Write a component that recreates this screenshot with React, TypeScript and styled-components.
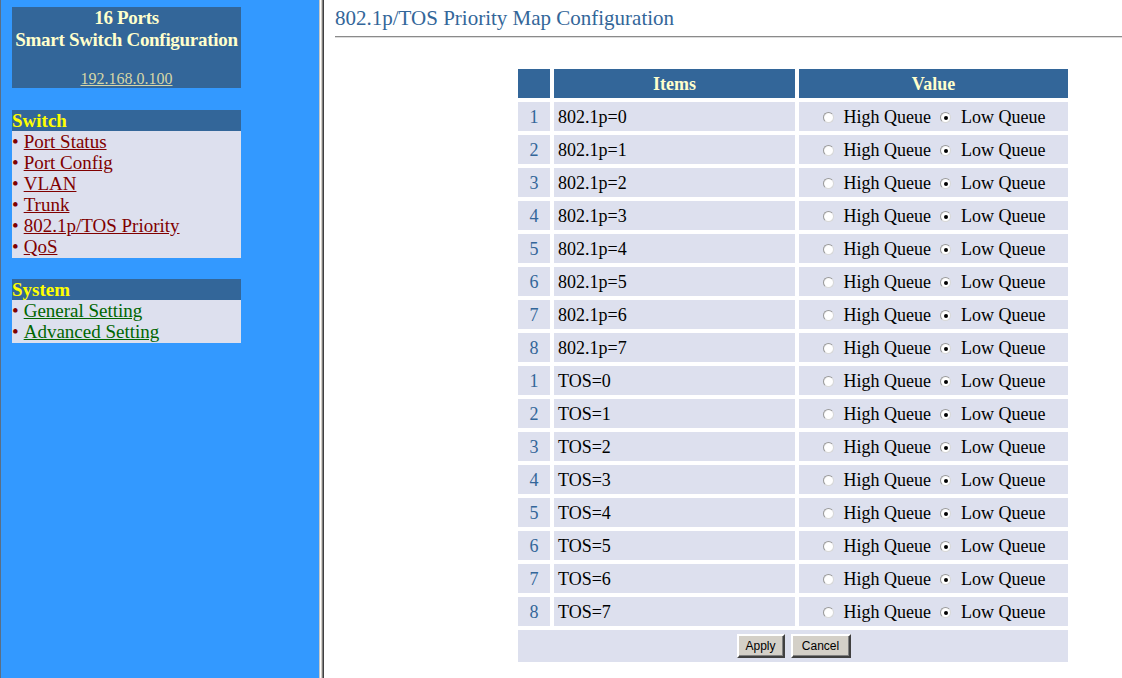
import React from 'react';
import styled, { createGlobalStyle } from 'styled-components';

const GlobalStyle = createGlobalStyle`
  html, body {
    margin: 0;
    padding: 0;
    height: 100%;
    overflow: hidden;
    background: #ffffff;
  }
  #root {
    height: 100%;
  }
`;

const Frameset = styled.div`
  display: grid;
  grid-template-columns: 319px 5px 1fr;
  height: 100vh;
  font-family: "Liberation Serif", "Times New Roman", serif;
`;

const MenuFrame = styled.div`
  background: #3399ff;
  border-left: 1px solid #5a6f86;
  padding: 7px 0 0 11px;
  display: flex;
  flex-direction: column;
`;

const FrameBorder = styled.div`
  background: linear-gradient(
    to right,
    #c8c8c8 0 1px,
    #ffffff 1px 2px,
    #d4d0c8 2px 3px,
    #808080 3px 4px,
    #404040 4px 5px
  );
`;

const TitleBox = styled.div`
  width: 229px;
  height: 81px;
  background: #336699;
  color: #ffffcc;
  text-align: center;
  font-weight: bold;
  font-size: 19px;
  line-height: 22px;
  letter-spacing: -0.3px;
  white-space: nowrap;
  box-sizing: border-box;
`;

const HostLink = styled.a`
  display: block;
  margin-top: 19px;
  font-weight: normal;
  font-size: 16px;
  line-height: 18px;
  letter-spacing: 0;
  color: #d6d6a6;
  text-decoration: underline;
`;

const MenuSection = styled.div<{ $gap: number }>`
  width: 229px;
  margin-top: ${(p) => p.$gap}px;
`;

const MenuHeader = styled.div`
  background: #336699;
  color: #ffff00;
  font-weight: bold;
  font-size: 19px;
  line-height: 21px;
  height: 21px;
`;

const MenuList = styled.div`
  background: #dde0ee;
  padding-bottom: 1px;
`;

const MenuItem = styled.div<{ $color: string }>`
  font-size: 19px;
  line-height: 21px;
  height: 21px;
  color: #800000;
  white-space: nowrap;

  a {
    color: ${(p) => p.$color};
    text-decoration: underline;
  }
`;

const Bullet = styled.span`
  color: #800000;
  margin-right: 5px;
`;

const ContentFrame = styled.div`
  padding: 6px 0 0 11px;
`;

const PageTitle = styled.div`
  color: #336699;
  font-size: 21px;
  line-height: 24px;
  height: 24px;
  white-space: nowrap;
`;

const Rule = styled.div`
  margin-top: 6px;
  border-top: 1px solid #8a8a8a;
  border-bottom: 1px solid #dcdcdc;
`;

const MapTable = styled.table`
  margin: 27px 0 0 179px;
  border-collapse: separate;
  border-spacing: 4px;
  font-size: 18px;
`;

const HeadCell = styled.th<{ $w: number }>`
  width: ${(p) => p.$w}px;
  height: 29px;
  padding: 2px 0 0;
  box-sizing: border-box;
  background: #336699;
  color: #ffffcc;
  font-weight: bold;
  text-align: center;
  vertical-align: middle;
`;

const NumCell = styled.td`
  height: 29px;
  padding: 2px 0 0;
  box-sizing: border-box;
  background: #dde0ee;
  color: #336699;
  text-align: center;
  vertical-align: middle;
`;

const ItemCell = styled.td`
  height: 29px;
  padding: 2px 0 0 4px;
  box-sizing: border-box;
  background: #dde0ee;
  color: #000000;
  text-align: left;
  vertical-align: middle;
  white-space: nowrap;
`;

const ValueCell = styled.td`
  height: 29px;
  padding: 2px 0 0 2px;
  box-sizing: border-box;
  background: #dde0ee;
  color: #000000;
  text-align: center;
  vertical-align: middle;
  white-space: nowrap;
`;

const ButtonCell = styled.td`
  height: 32px;
  padding: 0 0 0 1px;
  background: #dde0ee;
  text-align: center;
  vertical-align: middle;
`;

const Option = styled.label`
  display: inline-flex;
  align-items: center;
  margin-right: 5px;
`;

const Radio = styled.span<{ $checked: boolean }>`
  display: inline-block;
  position: relative;
  width: 9px;
  height: 9px;
  border-radius: 50%;
  border: 1px solid #9a9a9a;
  border-bottom-color: #d8d8d8;
  border-right-color: #d8d8d8;
  background: radial-gradient(circle at 60% 60%, #ffffff 0 55%, #e6e6e6 100%);
  margin: 0 10px 0 4px;

  &::after {
    content: '';
    display: ${(p) => (p.$checked ? 'block' : 'none')};
    position: absolute;
    left: 2.5px;
    top: 2.5px;
    width: 4px;
    height: 4px;
    border-radius: 50%;
    background: #000000;
  }
`;

const Button = styled.button<{ $w: number }>`
  width: ${(p) => p.$w}px;
  height: 24px;
  padding: 0;
  margin: 0 3px;
  vertical-align: middle;
  background: #d4d0c8;
  color: #000000;
  font-family: "Liberation Sans", Arial, sans-serif;
  font-size: 12px;
  border: 2px solid;
  border-color: #ffffff #404040 #404040 #ffffff;
  box-shadow: inset -1px -1px 0 #808080;
  border-radius: 0;
`;

const rows = [
  ...Array.from({ length: 8 }, (_, i) => ({ num: i + 1, label: `802.1p=${i}` })),
  ...Array.from({ length: 8 }, (_, i) => ({ num: i + 1, label: `TOS=${i}` })),
];

const switchLinks = ['Port Status', 'Port Config', 'VLAN', 'Trunk', '802.1p/TOS Priority', 'QoS'];
const systemLinks = ['General Setting', 'Advanced Setting'];

const App: React.FC = () => (
  <>
    <GlobalStyle />
    <Frameset>
      <MenuFrame>
        <TitleBox>
          16 Ports
          <br />
          Smart Switch Configuration
          <HostLink href="#">192.168.0.100</HostLink>
        </TitleBox>
        <MenuSection $gap={22}>
          <MenuHeader>Switch</MenuHeader>
          <MenuList>
            {switchLinks.map((name) => (
              <MenuItem key={name} $color="#800000">
                <Bullet>•</Bullet>
                <a href="#">{name}</a>
              </MenuItem>
            ))}
          </MenuList>
        </MenuSection>
        <MenuSection $gap={21}>
          <MenuHeader>System</MenuHeader>
          <MenuList>
            {systemLinks.map((name) => (
              <MenuItem key={name} $color="#006600">
                <Bullet>•</Bullet>
                <a href="#">{name}</a>
              </MenuItem>
            ))}
          </MenuList>
        </MenuSection>
      </MenuFrame>
      <FrameBorder />
      <ContentFrame>
        <PageTitle>802.1p/TOS Priority Map Configuration</PageTitle>
        <Rule />
        <MapTable>
          <thead>
            <tr>
              <HeadCell $w={32} />
              <HeadCell $w={241}>Items</HeadCell>
              <HeadCell $w={269}>Value</HeadCell>
            </tr>
          </thead>
          <tbody>
            {rows.map((row) => (
              <tr key={row.label}>
                <NumCell>{row.num}</NumCell>
                <ItemCell>{row.label}</ItemCell>
                <ValueCell>
                  <Option>
                    <Radio $checked={false} />
                    High Queue
                  </Option>
                  <Option>
                    <Radio $checked />
                    Low Queue
                  </Option>
                </ValueCell>
              </tr>
            ))}
            <tr>
              <ButtonCell colSpan={3}>
                <Button type="button" $w={48}>Apply</Button>
                <Button type="button" $w={60}>Cancel</Button>
              </ButtonCell>
            </tr>
          </tbody>
        </MapTable>
      </ContentFrame>
    </Frameset>
  </>
);

export default App;
